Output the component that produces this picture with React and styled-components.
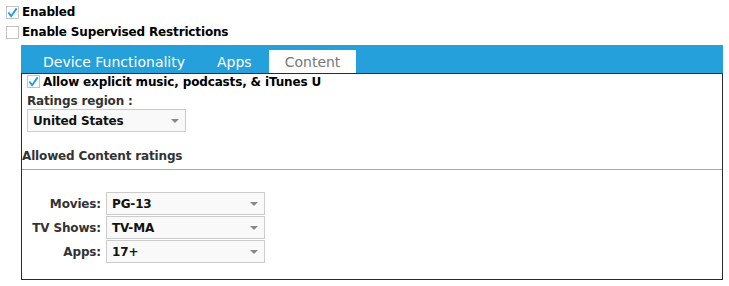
import React from "react";
import styled, { createGlobalStyle } from "styled-components";

const GlobalStyle = createGlobalStyle`
  body {
    margin: 0;
    background: #fff;
    font-family: "DejaVu Sans", Verdana, sans-serif;
    color: #111;
  }
`;

const Page = styled.div`
  padding: 2px 0 0 6px;
  width: 729px;
  box-sizing: border-box;
`;

const CheckRow = styled.label`
  display: flex;
  align-items: center;
  gap: 3px;
  height: ${(p) => p.$height || 20}px;
  font-size: 12px;
  font-weight: bold;
  letter-spacing: -0.15px;
  color: #000;
`;

const Box = styled.span`
  width: 11px;
  height: 11px;
  border: 1px solid #c4c4c4;
  background: #fff;
  display: flex;
  align-items: center;
  justify-content: center;
  flex: none;
`;

const Settings = styled.div`
  margin: 3px 0 0 15px;
  width: 702px;
`;

const TabBar = styled.div`
  height: 28px;
  background: #26a0da;
  display: flex;
  align-items: flex-end;
  padding-left: 7px;
  gap: 2px;
`;

const Tab = styled.div`
  height: 23px;
  padding: 0 ${(p) => (p.$active ? 16 : 15)}px;
  display: flex;
  align-items: center;
  font-size: 14px;
  color: ${(p) => (p.$active ? "#777" : "#fff")};
  background: ${(p) => (p.$active ? "#fff" : "transparent")};
`;

const Panel = styled.div`
  box-sizing: border-box;
  height: 207px;
  border: 1px solid #2b2b2b;
`;

const Section = styled.div`
  padding: 0 5px;
`;

const Label = styled.div`
  font-size: 12px;
  font-weight: bold;
  letter-spacing: -0.15px;
  color: #333;
  line-height: 16px;
  margin-top: ${(p) => p.$top || 0}px;
`;

const Select = styled.div`
  box-sizing: border-box;
  width: 159px;
  height: 23px;
  border: 1px solid #ccc;
  background: #f9f9f9;
  display: flex;
  align-items: center;
  justify-content: space-between;
  padding: 0 6px 0 5px;
  font-size: 12px;
  font-weight: bold;
  letter-spacing: -0.15px;
  color: #111;
`;

const Arrow = styled.span`
  width: 0;
  height: 0;
  border-left: 4px solid transparent;
  border-right: 4px solid transparent;
  border-top: 4px solid #888;
`;

const Rule = styled.hr`
  margin: 5px 0 0;
  border: 0;
  border-top: 1px solid #aaa;
  height: 0;
`;

const RatingsGrid = styled.div`
  display: grid;
  grid-template-columns: 74px 159px;
  column-gap: 5px;
  row-gap: 1px;
  align-items: center;
  padding-left: 5px;
  margin-top: 22px;
`;

const RowLabel = styled.div`
  text-align: right;
  font-size: 12px;
  font-weight: bold;
  letter-spacing: -0.15px;
  color: #333;
`;

function Check({ checked, height, children }) {
  return (
    <CheckRow $height={height}>
      <Box>
        {checked && (
          <svg width="12" height="11" viewBox="0 0 12 11">
            <path d="M1.5 5.5 L4.5 9.5 L10.5 1" fill="none" stroke="#1f9be0" strokeWidth="2" />
          </svg>
        )}
      </Box>
      {children}
    </CheckRow>
  );
}

function Dropdown({ value }) {
  return (
    <Select>
      <span>{value}</span>
      <Arrow />
    </Select>
  );
}

const ratings = [
  ["Movies:", "PG-13"],
  ["TV Shows:", "TV-MA"],
  ["Apps:", "17+"],
];

export default function App() {
  return (
    <>
      <GlobalStyle />
      <Page>
        <Check checked>Enabled</Check>
        <Check>Enable Supervised Restrictions</Check>
        <Settings>
          <TabBar>
            <Tab>Device Functionality</Tab>
            <Tab>Apps</Tab>
            <Tab $active>Content</Tab>
          </TabBar>
          <Panel>
            <Section>
              <Check checked height={15}>Allow explicit music, podcasts, &amp; iTunes U</Check>
              <Label $top={4}>Ratings region :</Label>
              <Dropdown value="United States" />
            </Section>
            <Label $top={16}>Allowed Content ratings</Label>
            <Rule />
            <RatingsGrid>
              {ratings.map(([label, value]) => (
                <React.Fragment key={label}>
                  <RowLabel>{label}</RowLabel>
                  <Dropdown value={value} />
                </React.Fragment>
              ))}
            </RatingsGrid>
          </Panel>
        </Settings>
      </Page>
    </>
  );
}
